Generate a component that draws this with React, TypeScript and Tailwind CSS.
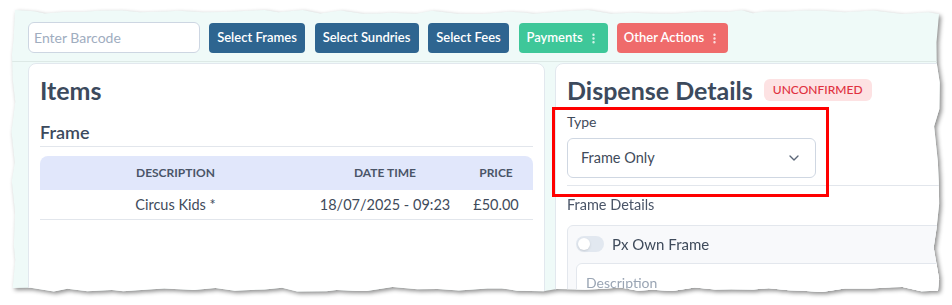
import { ChevronDown, EllipsisVertical } from 'lucide-react';

// deterministic jagged outline for the torn-paper look
function rng(seed: number) {
  let s = seed;
  return () => {
    s = (s * 16807) % 2147483647;
    return (s - 1) / 2147483646;
  };
}

function tornClip() {
  const r = rng(11);
  const pts: string[] = [];
  for (let x = 15; x < 936; x += 10 + r() * 20) pts.push(`${x}px ${10 + r() * 4}px`);
  for (let y = 14; y < 288; y += 14 + r() * 22) pts.push(`${933 + r() * 7}px ${y}px`);
  for (let x = 938; x > 16; x -= 10 + r() * 20) pts.push(`${x}px ${287 + r() * 5}px`);
  for (let y = 288; y > 14; y -= 14 + r() * 22) pts.push(`${11 + r() * 5}px ${y}px`);
  return `polygon(${pts.join(',')})`;
}

const clip = tornClip();

function ActionButton({ label, width, color, menu }: { label: string; width: string; color: string; menu?: boolean }) {
  return (
    <button
      className={`${width} ${color} h-[30px] rounded-[4px] text-white text-[13px] font-semibold flex items-center justify-center gap-[4px]`}
    >
      <span>{label}</span>
      {menu && <EllipsisVertical size={13} strokeWidth={2.5} className="opacity-80" />}
    </button>
  );
}

function ItemsCard() {
  return (
    <div className="shrink-0 w-[517px] h-[260px] bg-white border border-[#e2e8ee] rounded-lg px-[11px] pt-[10px]">
      <h2 className="text-[25px] leading-[32px] font-bold text-[#3c4a5d]">Items</h2>
      <h3 className="mt-[14px] text-[18px] leading-[24px] font-semibold text-[#3c4a5d] pb-[2px] border-b border-[#e2e6ec]">
        Frame
      </h3>
      <table className="mt-[9px] w-full text-center border-separate border-spacing-0">
        <thead>
          <tr className="text-[12px] font-bold uppercase text-[#4a5568]">
            <th className="w-[271px] h-[34px] bg-[#e1e7fb] rounded-tl-lg font-bold">Description</th>
            <th className="w-[148px] h-[34px] bg-[#e1e7fb] font-bold">Date Time</th>
            <th className="h-[34px] bg-[#e1e7fb] rounded-tr-lg font-bold">Price</th>
          </tr>
        </thead>
        <tbody>
          <tr className="text-[14.5px] text-[#3f4b5b]">
            <td className="h-[30px] border-b border-[#e2e6ec]">Circus Kids *</td>
            <td className="h-[30px] border-b border-[#e2e6ec]">18/07/2025 - 09:23</td>
            <td className="h-[30px] border-b border-[#e2e6ec]">£50.00</td>
          </tr>
        </tbody>
      </table>
    </div>
  );
}

function DispenseCard() {
  return (
    <div className="shrink-0 w-[420px] h-[260px] bg-white border border-[#e2e8ee] rounded-lg pl-[11px] pt-[10px]">
      <div className="flex items-center gap-[11px]">
        <h2 className="text-[25px] leading-[32px] font-bold text-[#3c4a5d]">Dispense Details</h2>
        <span className="h-[22px] px-[9px] rounded-md bg-[#fde2e3] text-[#e0313f] text-[12px] font-medium flex items-center">
          UNCONFIRMED
        </span>
      </div>
      <div className="mt-[8px] pb-[7px] border-b border-[#e2e6ec]">
        <div className="text-[14px] leading-[16px] text-[#3f4b5b]">Type</div>
        <div className="mt-[8px] w-[249px] h-[40px] border border-[#cfd7e2] rounded-md flex items-center justify-between px-[13px] text-[14.5px] text-[#3f4b5b]">
          <span>Frame Only</span>
          <ChevronDown size={16} strokeWidth={2} className="text-[#5b6778]" />
        </div>
      </div>
      <div className="mt-[9px] text-[14.5px] leading-[20px] text-[#4a5568]">Frame Details</div>
      <div className="mt-[10px] bg-[#f8f9fb] border border-[#e3e7ed] rounded-md px-[8px] pt-[8px] h-[100px]">
        <div className="flex items-center gap-[8px] h-[20px]">
          <div className="w-[28px] h-[16px] rounded-full bg-[#e2e8f0] flex items-center px-[2px]">
            <div className="w-[12px] h-[12px] rounded-full bg-white shadow-sm" />
          </div>
          <span className="text-[15px] text-[#3f4b5b]">Px Own Frame</span>
        </div>
        <div className="mt-[9px] h-[38px] bg-white border border-[#e3e7ed] rounded-md px-[9px] flex items-center text-[14px] text-[#9aa5b4]">
          Description
        </div>
      </div>
    </div>
  );
}

export default function App() {
  return (
    <div className="relative w-[952px] h-[305px] bg-white overflow-hidden font-['Lato','Liberation_Sans',sans-serif]">
      <div className="drop-shadow-[2px_2px_2px_rgba(0,0,0,0.45)]">
        <div className="w-[952px] h-[305px] bg-[#effaf8]" style={{ clipPath: clip }}>
          <div className="h-[62px] border-b border-[#dde9e6] pl-[28px] pt-[22px] flex gap-[9px]">
            <div className="w-[172px] h-[31px] bg-white border border-[#cdd6e2] rounded-md flex items-center px-[5px] text-[14px] text-[#a0adbf]">
              Enter Barcode
            </div>
            <div className="flex gap-[9.5px] pt-[1px]">
              <ActionButton label="Select Frames" width="w-[96px]" color="bg-[#2e6590]" />
              <ActionButton label="Select Sundries" width="w-[104px]" color="bg-[#2e6590]" />
              <ActionButton label="Select Fees" width="w-[81px]" color="bg-[#2e6590]" />
              <ActionButton label="Payments" width="w-[89px]" color="bg-[#3ec799]" menu />
              <ActionButton label="Other Actions" width="w-[111px]" color="bg-[#ef6b6b]" menu />
            </div>
          </div>
          <div className="pl-[28px] pt-[1px] flex gap-[10px]">
            <ItemsCard />
            <DispenseCard />
          </div>
        </div>
      </div>
      {/* annotation box */}
      <div className="absolute left-[552px] top-[107px] w-[277px] h-[90px] border-[3px] border-[#ff0000]" />
    </div>
  );
}
